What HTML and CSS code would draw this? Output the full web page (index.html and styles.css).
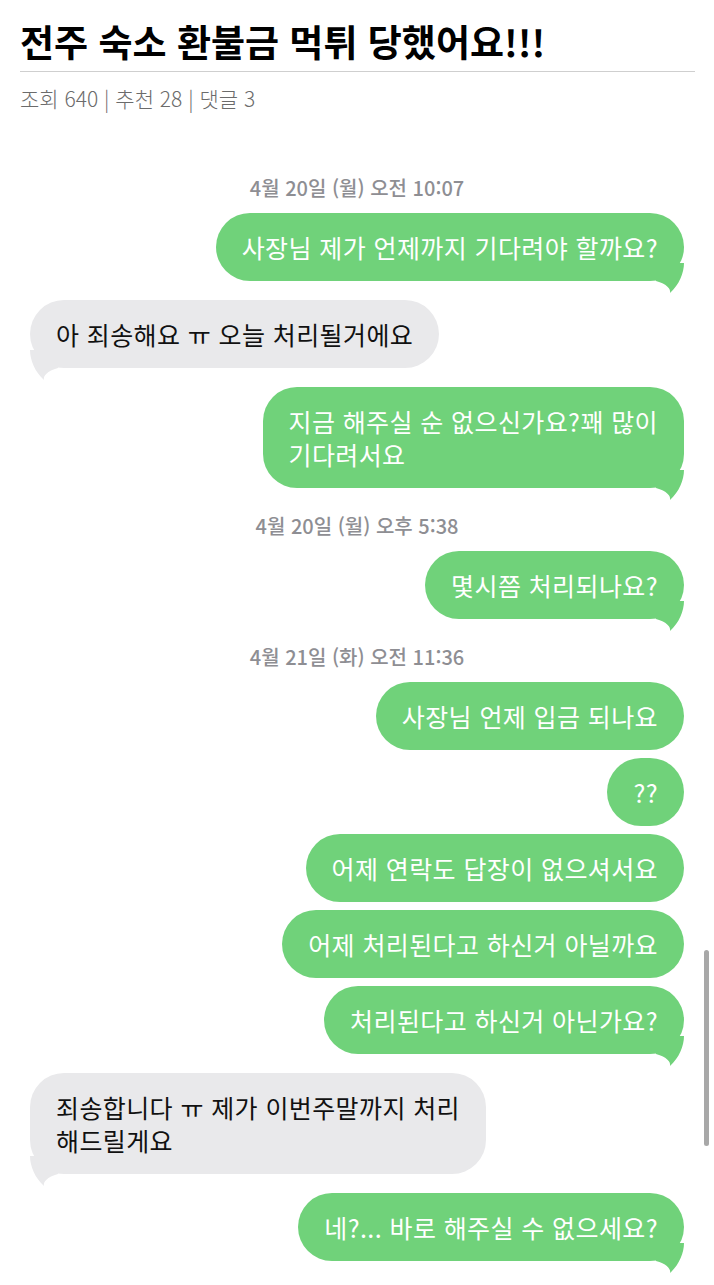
FILE: index.html
```html
<!DOCTYPE html>
<html lang="ko">
<head>
    <meta charset="UTF-8">
    <meta name="viewport" content="width=device-width, initial-scale=1.0">
    <title>전주 숙소 환불금 먹튀 당했어요!!!</title>
    <link rel="stylesheet" href="styles.css">
</head>
<body>
    <header class="post-head">
        <h1 class="post-title">전주 숙소 환불금 먹튀 당했어요!!!</h1>
        <div class="post-meta">조회 640 | 추천 28 | 댓글 3</div>
    </header>

    <main class="chat">
        <div class="stamp">4월 20일 (월) 오전 10:07</div>
        <div class="msg sent tail">사장님 제가 언제까지 기다려야 할까요?</div>
        <div class="msg recv tail">아 죄송해요 ㅠ 오늘 처리될거에요</div>
        <div class="msg sent tail">지금 해주실 순 없으신가요?꽤 많이<br>기다려서요</div>

        <div class="stamp">4월 20일 (월) 오후 5:38</div>
        <div class="msg sent tail">몇시쯤 처리되나요?</div>

        <div class="stamp">4월 21일 (화) 오전 11:36</div>
        <div class="msg sent">사장님 언제 입금 되나요</div>
        <div class="msg sent">??</div>
        <div class="msg sent">어제 연락도 답장이 없으셔서요</div>
        <div class="msg sent">어제 처리된다고 하신거 아닐까요</div>
        <div class="msg sent tail">처리된다고 하신거 아닌가요?</div>
        <div class="msg recv tail">죄송합니다 ㅠ 제가 이번주말까지 처리<br>해드릴게요</div>
        <div class="msg sent tail">네?... 바로 해주실 수 없으세요?</div>
    </main>

    <div class="scrollbar"></div>
</body>
</html>
```

FILE: styles.css
```css
body {
    margin: 0;
    background-color: #fff;
    font-family: "Noto Sans CJK KR", "Noto Sans", sans-serif;
}

.post-head {
    padding: 16px 19px 0 20px;
}

.post-title {
    margin: 0;
    padding-bottom: 5px;
    border-bottom: 1px solid #cfcfcf;
    font-size: 37px;
    font-weight: 700;
    line-height: 50px;
    color: #000;
}

.post-meta {
    margin-top: 12px;
    font-size: 21px;
    font-weight: 300;
    line-height: 28px;
    color: #6b6b6b;
}

.chat {
    display: flex;
    flex-direction: column;
    padding: 64px 30px 20px 30px;
}

.stamp {
    align-self: center;
    font-size: 20px;
    font-weight: 500;
    line-height: 24px;
    color: #8e8e93;
    margin-bottom: 13px;
}

.msg + .stamp {
    margin-top: 7px;
}

.msg {
    position: relative;
    padding: 17.5px 26px;
    border-radius: 34px;
    font-size: 25px;
    line-height: 33px;
    letter-spacing: 0.4px;
    margin-bottom: 8px;
}

.msg.tail {
    margin-bottom: 19px;
}

.sent {
    align-self: flex-end;
    background-color: #70d27a;
    color: #fff;
}

.recv {
    align-self: flex-start;
    background-color: #e9e9eb;
    color: #111;
}

.msg.tail::after {
    content: "";
    position: absolute;
    bottom: -12px;
    width: 28px;
    height: 30px;
    background-color: inherit;
}

.sent.tail::after {
    right: 0;
    clip-path: path("M0 0 L28 0 C28 10 23 22 14 30 C15 26 11 21 0 18 Z");
}

.recv.tail::after {
    left: 0;
    clip-path: path("M28 0 L0 0 C0 10 5 22 14 30 C13 26 17 21 28 18 Z");
}

.scrollbar {
    position: fixed;
    top: 950px;
    right: 5px;
    width: 5px;
    height: 196px;
    border-radius: 3px;
    background-color: #a8a8a8;
}
```
